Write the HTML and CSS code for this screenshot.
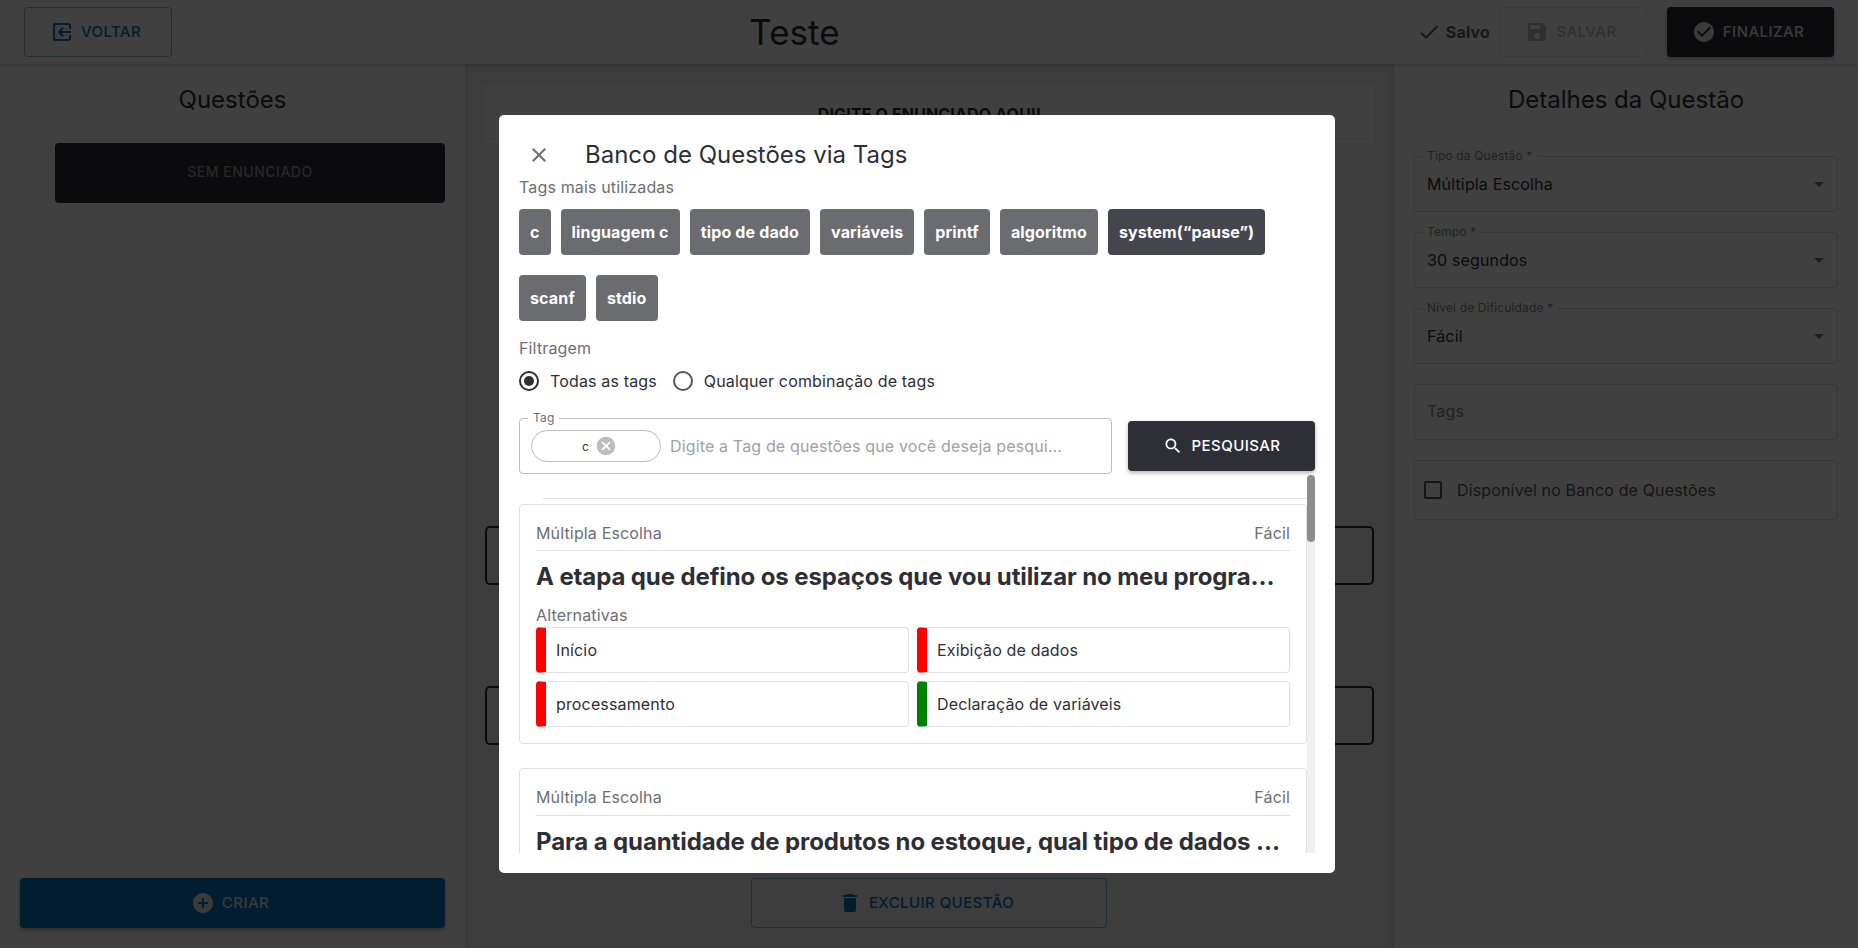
FILE: index.html
```html
<!DOCTYPE html>
<html lang="pt-BR">

<head>
    <meta charset="UTF-8">
    <meta name="viewport" content="width=device-width, initial-scale=1.0">
    <title>Teste</title>
    <link rel="stylesheet" href="styles.css">
</head>

<body>
    <div class="app">
        <header class="topbar">
            <button type="button" class="btn btn-outline btn-voltar">
                <svg class="icon icon-flip" viewBox="0 0 24 24"><path d="M10.09 15.59L11.5 17l5-5-5-5-1.41 1.41L12.67 11H3v2h9.67l-2.58 2.59zM19 3H5c-1.11 0-2 .9-2 2v4h2V5h14v14H5v-4H3v4c0 1.1.89 2 2 2h14c1.1 0 2-.9 2-2V5c0-1.1-.9-2-2-2z"/></svg>
                VOLTAR
            </button>
            <h1 class="page-title">Teste</h1>
            <div class="topbar-actions">
                <span class="saved">
                    <svg class="icon" viewBox="0 0 24 24"><path d="M9 16.17L4.83 12l-1.42 1.41L9 19 21 7l-1.41-1.41z"/></svg>
                    Salvo
                </span>
                <button type="button" class="btn btn-disabled">
                    <svg class="icon" viewBox="0 0 24 24"><path d="M17 3H5c-1.11 0-2 .9-2 2v14c0 1.1.89 2 2 2h14c1.1 0 2-.9 2-2V7l-4-4zm-5 16c-1.66 0-3-1.34-3-3s1.34-3 3-3 3 1.34 3 3-1.34 3-3 3zm3-10H5V5h10v4z"/></svg>
                    SALVAR
                </button>
                <button type="button" class="btn btn-dark btn-finalizar">
                    <svg class="icon" viewBox="0 0 24 24"><path d="M12 2C6.48 2 2 6.48 2 12s4.48 10 10 10 10-4.48 10-10S17.52 2 12 2zm-2 15l-5-5 1.41-1.41L10 14.17l7.59-7.59L19 8l-9 9z"/></svg>
                    FINALIZAR
                </button>
            </div>
        </header>

        <main class="columns">
            <section class="col-left">
                <h2 class="col-title">Questões</h2>
                <div class="question-item">SEM ENUNCIADO</div>
                <button type="button" class="btn btn-primary btn-criar">
                    <svg class="icon" viewBox="0 0 24 24"><path d="M12 2C6.48 2 2 6.48 2 12s4.48 10 10 10 10-4.48 10-10S17.52 2 12 2zm5 11h-4v4h-2v-4H7v-2h4V7h2v4h4v2z"/></svg>
                    CRIAR
                </button>
            </section>

            <section class="col-middle">
                <div class="statement">DIGITE O ENUNCIADO AQUI!</div>
                <div class="answer-box answer-first"></div>
                <div class="answer-box answer-second"></div>
                <button type="button" class="btn btn-outline btn-excluir">
                    <svg class="icon" viewBox="0 0 24 24"><path d="M6 19c0 1.1.9 2 2 2h8c1.1 0 2-.9 2-2V7H6v12zM19 4h-3.5l-1-1h-5l-1 1H5v2h14V4z"/></svg>
                    EXCLUIR QUESTÃO
                </button>
            </section>

            <section class="col-right">
                <h2 class="col-title">Detalhes da Questão</h2>
                <div class="field">
                    <span class="field-label">Tipo da Questão *</span>
                    <span>Múltipla Escolha</span>
                    <span class="caret"></span>
                </div>
                <div class="field">
                    <span class="field-label">Tempo *</span>
                    <span>30 segundos</span>
                    <span class="caret"></span>
                </div>
                <div class="field">
                    <span class="field-label">Nível de Dificuldade *</span>
                    <span>Fácil</span>
                    <span class="caret"></span>
                </div>
                <div class="field field-placeholder">Tags</div>
                <label class="field field-check">
                    <span class="checkbox"></span>
                    Disponível no Banco de Questões
                </label>
            </section>
        </main>
    </div>

    <div class="backdrop"></div>

    <div class="modal">
        <div class="modal-head">
            <svg class="modal-close" viewBox="0 0 24 24"><path d="M19 6.41L17.59 5 12 10.59 6.41 5 5 6.41 10.59 12 5 17.59 6.41 19 12 13.41 17.59 19 19 17.59 13.41 12 19 6.41z"/></svg>
            <h2 class="modal-title">Banco de Questões via Tags</h2>
        </div>

        <div class="muted">Tags mais utilizadas</div>
        <div class="tags">
            <span class="tag">c</span>
            <span class="tag">linguagem c</span>
            <span class="tag">tipo de dado</span>
            <span class="tag">variáveis</span>
            <span class="tag">printf</span>
            <span class="tag">algoritmo</span>
            <span class="tag tag-active">system(“pause”)</span>
            <span class="tag">scanf</span>
            <span class="tag">stdio</span>
        </div>

        <div class="muted filter-label">Filtragem</div>
        <div class="radios">
            <label class="radio-item"><span class="radio radio-on"></span>Todas as tags</label>
            <label class="radio-item"><span class="radio"></span>Qualquer combinação de tags</label>
        </div>

        <div class="search-row">
            <div class="tag-input">
                <span class="tag-input-label">Tag</span>
                <span class="chip">
                    c
                    <svg class="chip-x" viewBox="0 0 24 24"><path d="M12 2C6.47 2 2 6.47 2 12s4.47 10 10 10 10-4.47 10-10S17.53 2 12 2zm5 13.59L15.59 17 12 13.41 8.41 17 7 15.59 10.59 12 7 8.41 8.41 7 12 10.59 15.59 7 17 8.41 13.41 12 17 15.59z"/></svg>
                </span>
                <span class="tag-input-text">Digite a Tag de questões que você deseja pesquisar</span>
            </div>
            <button type="button" class="btn btn-search">
                <svg class="icon" viewBox="0 0 24 24"><path d="M15.5 14h-.79l-.28-.27C15.41 12.59 16 11.11 16 9.5 16 5.91 13.09 3 9.5 3S3 5.91 3 9.5 5.91 16 9.5 16c1.61 0 3.09-.59 4.23-1.57l.27.28v.79l5 4.99L20.49 19l-4.99-5zm-6 0C7.01 14 5 11.99 5 9.5S7.01 5 9.5 5 14 7.01 14 9.5 11.99 14 9.5 14z"/></svg>
                PESQUISAR
            </button>
        </div>

        <div class="results">
            <div class="results-rule"></div>

            <article class="card">
                <div class="card-head"><span>Múltipla Escolha</span><span>Fácil</span></div>
                <h3 class="card-title">A etapa que defino os espaços que vou utilizar no meu programa de computador</h3>
                <div class="muted alt-label">Alternativas</div>
                <div class="alts">
                    <div class="alt alt-wrong">Início</div>
                    <div class="alt alt-wrong">Exibição de dados</div>
                    <div class="alt alt-wrong">processamento</div>
                    <div class="alt alt-right">Declaração de variáveis</div>
                </div>
            </article>

            <article class="card card-next">
                <div class="card-head"><span>Múltipla Escolha</span><span>Fácil</span></div>
                <h3 class="card-title">Para a quantidade de produtos no estoque, qual tipo de dados devemos utilizar</h3>
            </article>

            <div class="scroll-track"><div class="scroll-thumb"></div></div>
        </div>
    </div>
</body>

</html>
```

FILE: styles.css
```css
* {
    box-sizing: border-box;
}

html,
body {
    height: 100%;
}

body {
    margin: 0;
    font-family: Inter, "Noto Sans", Arial, sans-serif;
    font-size: 16px;
    letter-spacing: 0.15px;
    color: #2e2f36;
    background-color: #fff;
    overflow: hidden;
}

h1,
h2,
h3 {
    margin: 0;
    font-weight: 400;
    letter-spacing: 0;
}

.icon {
    width: 24px;
    height: 24px;
    fill: currentColor;
    flex: none;
}

.icon-flip {
    transform: scaleX(-1);
}

/* buttons */
.btn {
    display: flex;
    align-items: center;
    justify-content: center;
    gap: 7px;
    height: 50px;
    padding: 0 21px 1px 16px;
    border-radius: 4px;
    border: 1px solid transparent;
    font-family: inherit;
    font-size: 15px;
    font-weight: 500;
    letter-spacing: 0.43px;
    background: none;
}

.btn-outline {
    border-color: rgba(8, 112, 192, 0.5);
    color: #0870c0;
}

.btn-disabled {
    width: 147px;
    margin-left: 10px;
    border-color: #e6e6e6;
    color: #bdbdbd;
}

.btn-dark {
    background-color: #2e2f36;
    color: #e8e8e8;
    box-shadow: 0 2px 4px rgba(0, 0, 0, 0.3);
}

.btn-primary {
    background-color: #0870c0;
    color: #e8e8e8;
    box-shadow: 0 2px 4px rgba(0, 0, 0, 0.3);
}

/* top bar */
.app {
    display: flex;
    flex-direction: column;
    height: 100vh;
}

.topbar {
    display: flex;
    align-items: center;
    justify-content: space-between;
    height: 64px;
    padding: 0 24px;
    background-color: #fff;
    box-shadow: 0 1px 4px rgba(0, 0, 0, 0.2);
    position: relative;
}

.btn-voltar {
    width: 148px;
}

.page-title {
    font-size: 35px;
    color: #2e2f36;
}

.topbar-actions {
    display: flex;
    align-items: center;
}

.saved {
    display: flex;
    align-items: center;
    gap: 5px;
    font-weight: 700;
    color: #5e5f66;
}

.btn-finalizar {
    width: 167px;
    margin-left: 20px;
}

/* three columns */
.columns {
    flex: 1;
    display: grid;
    grid-template-columns: 465px 929px 1fr;
    min-height: 0;
}

.col-left,
.col-right {
    display: flex;
    flex-direction: column;
}

.col-left {
    padding: 0 20px 20px;
}

.col-title {
    margin-top: 21px;
    font-size: 24px;
    line-height: 30px;
    text-align: center;
    color: #2e2f36;
}

.question-item {
    display: flex;
    align-items: center;
    justify-content: center;
    height: 60px;
    margin: 28px 0 0 35px;
    padding-bottom: 3px;
    border-radius: 4px;
    background-color: #2e2f36;
    color: #9a9a9e;
    font-size: 14px;
    font-weight: 500;
    letter-spacing: 0.5px;
}

.btn-criar {
    margin-top: auto;
}

.col-middle {
    display: flex;
    flex-direction: column;
    padding: 21px 20px 20px;
    background-color: #f4f4f4;
    box-shadow: inset 0 5px 5px -4px rgba(0, 0, 0, 0.12), inset 5px 0 5px -4px rgba(0, 0, 0, 0.12), inset -5px 0 5px -4px rgba(0, 0, 0, 0.12);
}

.statement {
    display: flex;
    align-items: center;
    justify-content: center;
    height: 58px;
    background-color: #fdfdfd;
    font-weight: 700;
}

.answer-box {
    height: 59px;
    border: 2px solid #2e2f36;
    border-radius: 5px;
}

.answer-first {
    margin-top: 383px;
}

.answer-second {
    margin-top: 101px;
}

.btn-excluir {
    align-self: center;
    width: 356px;
    margin: auto 2px 0 0;
}

.col-right {
    padding: 0 20px;
}

.field {
    position: relative;
    display: flex;
    align-items: center;
    height: 56px;
    margin-top: 20px;
    padding: 0 12px;
    border: 1px solid #d8d8d8;
    border-radius: 4px;
    color: #2e2f36;
}

.col-title + .field {
    margin-top: 41px;
}

.field-label {
    position: absolute;
    top: -8px;
    left: 7px;
    padding: 0 5px;
    background-color: #fff;
    font-size: 12px;
    line-height: 14px;
    color: #85868b;
}

.caret {
    position: absolute;
    right: 13px;
    top: 25px;
    border-left: 5px solid transparent;
    border-right: 5px solid transparent;
    border-top: 5px solid #76777c;
}

.field-placeholder {
    padding-bottom: 2px;
    color: #85868b;
}

.field-check {
    gap: 15px;
    height: 60px;
    padding: 0 9px;
    color: #55565c;
}

.checkbox {
    width: 18px;
    height: 18px;
    border: 2px solid #55565c;
    border-radius: 2px;
}

/* modal */
.backdrop {
    position: fixed;
    inset: 0;
    background-color: rgba(0, 0, 0, 0.75);
}

.modal {
    position: fixed;
    left: 499px;
    top: 115px;
    width: 836px;
    height: 758px;
    padding: 20px 20px 20px;
    border-radius: 5px;
    background-color: #fff;
}

.modal-head {
    display: flex;
    align-items: center;
    height: 40px;
}

.modal-close {
    width: 24px;
    height: 24px;
    margin-left: 8px;
    fill: #6d6e73;
}

.modal-title {
    margin-left: 34px;
    padding-bottom: 2px;
    font-size: 24px;
    color: #2e2f36;
}

.muted {
    line-height: 24px;
    color: #6d6e73;
}

.tags {
    display: flex;
    flex-wrap: wrap;
    gap: 20px 10px;
    margin-top: 10px;
}

.tag {
    display: flex;
    align-items: center;
    height: 46px;
    padding: 0 11px;
    border-radius: 4px;
    background-color: #6b6c70;
    color: #fff;
    font-weight: 700;
}

.tag-active {
    background-color: #45464d;
    letter-spacing: 0.05px;
}

.filter-label {
    margin-top: 15px;
}

.radios {
    display: flex;
    gap: 16px;
    margin-top: 9px;
    height: 24px;
}

.radio-item {
    display: flex;
    align-items: center;
    gap: 11px;
    color: #2e2f36;
}

.radio {
    position: relative;
    width: 20px;
    height: 20px;
    border: 2px solid #55565c;
    border-radius: 50%;
}

.radio-on {
    border-color: #2e2f36;
}

.radio-on::after {
    content: "";
    position: absolute;
    inset: 3px;
    border-radius: 50%;
    background-color: #2e2f36;
}

.search-row {
    display: flex;
    align-items: center;
    gap: 16px;
    margin-top: 25px;
}

.tag-input {
    position: relative;
    flex: 1;
    min-width: 0;
    display: flex;
    align-items: center;
    height: 56px;
    padding: 0 47px 0 11px;
    border: 1px solid #bdbdbd;
    border-radius: 4px;
}

.tag-input-label {
    position: absolute;
    top: -8px;
    left: 8px;
    padding: 0 5px;
    background-color: #fff;
    font-size: 12px;
    line-height: 14px;
    color: #6d6e73;
}

.chip {
    flex: none;
    display: flex;
    align-items: center;
    justify-content: center;
    gap: 6px;
    width: 130px;
    height: 32px;
    padding-left: 7px;
    border: 1px solid #bdbdbd;
    border-radius: 16px;
    font-size: 12px;
    color: #2e2f36;
}

.chip-x {
    width: 22px;
    height: 22px;
    fill: #bdbdbd;
}

.tag-input-text {
    flex: 1;
    min-width: 0;
    margin-left: 9px;
    overflow: hidden;
    white-space: nowrap;
    text-overflow: ellipsis;
    color: #a0a1a5;
}

.btn-search {
    flex: none;
    width: 187px;
    gap: 9px;
    padding: 0 16px 1px;
    background-color: #2e2f36;
    color: #fff;
    box-shadow: 0 2px 4px rgba(0, 0, 0, 0.3);
}

.btn-search .icon {
    width: 20px;
    height: 20px;
}

/* result list */
.results {
    position: relative;
    height: 378px;
    margin-top: 1px;
    padding: 23px 8px 0 0;
    overflow: hidden;
}

.results-rule {
    height: 1px;
    margin: 0 0 5px 24px;
    background-color: #e0e0e0;
}

.card {
    padding: 16px;
    border: 1px solid #e0e0e0;
    border-radius: 4px;
    margin-bottom: 24px;
}

.card-head {
    display: flex;
    justify-content: space-between;
    padding-bottom: 5px;
    border-bottom: 1px solid #e0e0e0;
    line-height: 24px;
    color: #6d6e73;
}

.card-title {
    margin-top: 8px;
    font-size: 24px;
    font-weight: 700;
    line-height: 36px;
    letter-spacing: -0.11px;
    color: #2e2f36;
    overflow: hidden;
    white-space: nowrap;
    text-overflow: ellipsis;
}

.card-next .card-head {
    padding-bottom: 6px;
}

.card-next .card-title {
    margin-top: 8px;
}

.alt-label {
    margin-top: 8px;
}

.alts {
    display: grid;
    grid-template-columns: 1fr 1fr;
    gap: 8px;
}

.alt {
    display: flex;
    align-items: center;
    height: 46px;
    padding-left: 10px;
    border: 1px solid #e0e0e0;
    border-left-width: 10px;
    border-radius: 4px;
    color: #2e2f36;
}

.alt-wrong {
    border-left-color: #f00;
}

.alt-right {
    border-left-color: #008000;
}

.scroll-track {
    position: absolute;
    top: 0;
    right: 0;
    bottom: 0;
    width: 8px;
    background-color: #f1f1f1;
}

.scroll-thumb {
    height: 67px;
    border-radius: 4px;
    background-color: #8c8c8c;
}
```
